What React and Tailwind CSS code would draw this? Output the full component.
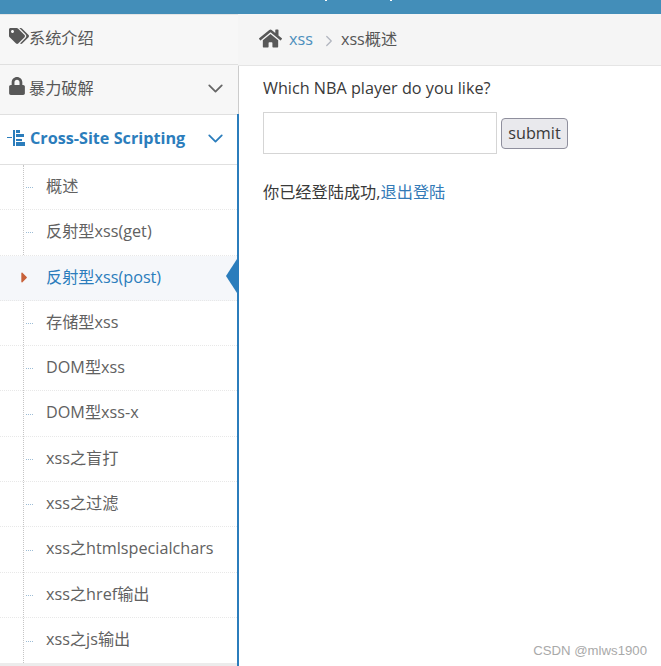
import React from "react";
import { FaTags, FaLock, FaHome, FaCaretRight } from "react-icons/fa";
import { ChevronDown, ChevronRight } from "lucide-react";

const subItems = [
  "概述",
  "反射型xss(get)",
  "反射型xss(post)",
  "存储型xss",
  "DOM型xss",
  "DOM型xss-x",
  "xss之盲打",
  "xss之过滤",
  "xss之htmlspecialchars",
  "xss之href输出",
  "xss之js输出",
];

const fontStack = "font-['Open_Sans','Noto_Sans_CJK_SC',sans-serif]";

const SubItem = ({ label, active, last }) => (
  <li
    className={`relative h-[45.3px] flex items-center pl-[46px] pb-[2px] text-[16.2px] ${
      last ? "" : "border-b border-dotted border-[#e8e8e8]"
    } ${active ? "bg-[#f5f7fa] text-[#2b7dbc]" : "text-[#616161]"}`}
  >
    {/* dotted branch */}
    {!active && (
      <span className="absolute left-[26px] top-1/2 w-[7px] border-t border-dotted border-[#9dbdd6]"></span>
    )}
    {active && (
      <FaCaretRight size={17} className="absolute left-[16px] top-[13px] text-[#c86139]" />
    )}
    {label}
    {active && (
      <span className="absolute right-0 top-[3px] w-0 h-0 border-y-[17px] border-y-transparent border-r-[11px] border-r-[#2b7dbc]"></span>
    )}
  </li>
);

export default function App() {
  return (
    <div className={`h-[666px] w-[661px] overflow-hidden bg-white flex flex-col ${fontStack}`}>
      {/* Top bar, the title is cut off so only two descenders show */}
      <div className="h-[14px] bg-[#438eb9] shrink-0 flex items-start pl-[325px] gap-[63px]">
        <span className="w-[2px] h-px bg-white"></span>
        <span className="w-[2px] h-px bg-white"></span>
      </div>

      <div className="flex flex-1 min-h-0">
        {/* Sidebar */}
        <div className="w-[239px] shrink-0 flex flex-col">
          <div className="h-[51px] shrink-0 pb-[3px] bg-[#f7f7f7] border-t border-[#e5e5e5] border-b border-b-[#e0e0e0] border-r border-r-[#cccccc] flex items-center pl-[9px] text-[#585858] text-[16.2px]">
            <FaTags size={20} className="-mt-1" />
            系统介绍
          </div>
          <div className="h-[50px] shrink-0 pb-[3px] bg-[#f7f7f7] border-b border-[#e0e0e0] border-r border-r-[#cccccc] flex items-center pl-[8px] text-[#585858] text-[16.2px]">
            <FaLock size={18} className="mr-[3px] -mt-1" />
            暴力破解
            <ChevronDown size={25} strokeWidth={1.7} className="ml-auto mr-[10px] text-[#666666]" />
          </div>
          <div className="flex-1 -mt-px border-r-2 border-[#2b7dbc] flex flex-col min-h-0">
            <div className="h-[51px] shrink-0 pb-[3px] border-y border-[#e0e0e0] flex items-center pl-[7px] text-[#2b7dbc] text-[16.2px] font-bold">
              <svg width="19" height="16" viewBox="0 0 19 16" className="mr-[4px] shrink-0" fill="currentColor">
                <rect x="0" y="7" width="5" height="1" />
                <rect x="6" y="0" width="2" height="16" />
                <rect x="9" y="0" width="4" height="3" />
                <rect x="9" y="4" width="8" height="3" />
                <rect x="9" y="9" width="6" height="2" />
                <rect x="9" y="12" width="9" height="4" />
              </svg>
              Cross-Site Scripting
              <ChevronDown size={25} strokeWidth={1.7} className="ml-auto mr-[9px]" />
            </div>
            <ul className="relative flex-1 min-h-0">
              <span className="absolute left-[23px] top-0 bottom-0 border-l border-dotted border-[#c5c5c5]"></span>
              {subItems.map((label, i) => (
                <SubItem
                  key={label}
                  label={label}
                  active={i === 2}
                  last={i === subItems.length - 1}
                />
              ))}
            </ul>
            <div className="h-[3px] shrink-0 bg-[#ececec]"></div>
          </div>
        </div>

        {/* Main */}
        <div className="relative flex-1 min-w-0 -ml-px">
          <div className="h-[52px] bg-[#f5f5f5] border-b border-[#e5e5e5] flex items-center pl-[21px] text-[16.2px]">
            <FaHome size={23} className="text-[#585858] mr-[7px] -mt-[3px]" />
            <span className="text-[#4c8fbd]">xss</span>
            <ChevronRight size={18} strokeWidth={1.7} className="text-[#b2b6bf] ml-[7px] mr-[3px] mt-[2px]" />
            <span className="text-[#555555]">xss概述</span>
          </div>
          <div className="pl-[25px] text-[16.2px] text-[#393939]">
            <p className="mt-[11px] leading-[22px]">Which NBA player do you like?</p>
            <div className="flex items-center mt-[13px]">
              <input
                type="text"
                className="w-[234px] h-[42px] bg-white border border-[#d5d5d5] outline-none"
              />
              <button className="ml-[4px] h-[31px] w-[67px] mt-[1px] rounded-[4px] border border-[#8f8f9d] bg-[#e9e9ed] text-[#393939] text-[16.2px]">
                submit
              </button>
            </div>
            <p className="mt-[27px] leading-[22px]">
              你已经登陆成功,<span className="text-[#337ab7]">退出登陆</span>
            </p>
          </div>
          {/* Watermark */}
          <span className="absolute right-[14px] bottom-[7px] text-[13.2px] leading-[16px] text-[#a9a9a9] font-['Liberation_Sans',sans-serif]">
            CSDN @mlws1900
          </span>
        </div>
      </div>
    </div>
  );
}
